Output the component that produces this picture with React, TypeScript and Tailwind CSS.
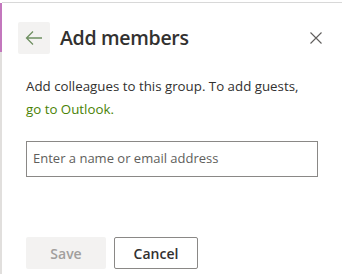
export default function App() {
  return (
    <div className="flex h-[274px] w-[342px] overflow-hidden bg-white font-['Open_Sans','Noto_Sans',sans-serif] text-[#323130]">
      <div className="flex w-[2px] flex-col pt-[3px]">
        <div className="h-[49px] bg-[#c377bd]" />
        <div className="flex-1 bg-[#e1dfdd]" />
      </div>
      <div className="mt-[2px] flex flex-1 flex-col border-t border-[#d8d8d8]">
        <div className="flex items-center pl-[16px] pr-[14px] pt-[19px]">
          <button className="flex h-[32px] w-[32px] items-center justify-center rounded-[2px] bg-[#f3f2f1]">
            <svg width="18" height="16" viewBox="0 0 18 16" fill="none">
              <path d="M17 8H2M8 1.5L1.5 8L8 14.5" stroke="#6f9062" strokeWidth="1.3" />
            </svg>
          </button>
          <h1 className="ml-[10px] text-[19.5px] font-semibold leading-[28px] tracking-[-0.3px]">Add members</h1>
          <button className="ml-auto mr-[2px] flex h-[20px] w-[20px] items-center justify-center">
            <svg width="12" height="12" viewBox="0 0 12 12" fill="none">
              <path d="M0.5 0.5L11.5 11.5M11.5 0.5L0.5 11.5" stroke="#605e5c" strokeWidth="1.1" />
            </svg>
          </button>
        </div>
        <p className="mt-[21px] pl-[24px] pr-[16px] text-[13.3px] leading-[23px]">
          Add colleagues to this group. To add guests,
          <br />
          <a className="text-[#498205]">go to Outlook.</a>
        </p>
        <div className="mt-[20px] ml-[24px] mr-[24px] flex h-[36px] items-center border border-[#8a8886] px-[6px] text-[13px] text-[#605e5c]">
          Enter a name or email address
        </div>
        <div className="mt-auto mb-[5px] ml-[24px] flex gap-[8px]">
          <button className="h-[32px] w-[80px] rounded-[2px] bg-[#f3f2f1] text-[14px] font-semibold text-[#a19f9d]">Save</button>
          <button className="h-[32px] w-[84px] rounded-[2px] border border-[#8a8886] bg-white text-[14px] font-semibold text-[#323130]">Cancel</button>
        </div>
      </div>
    </div>
  );
}
